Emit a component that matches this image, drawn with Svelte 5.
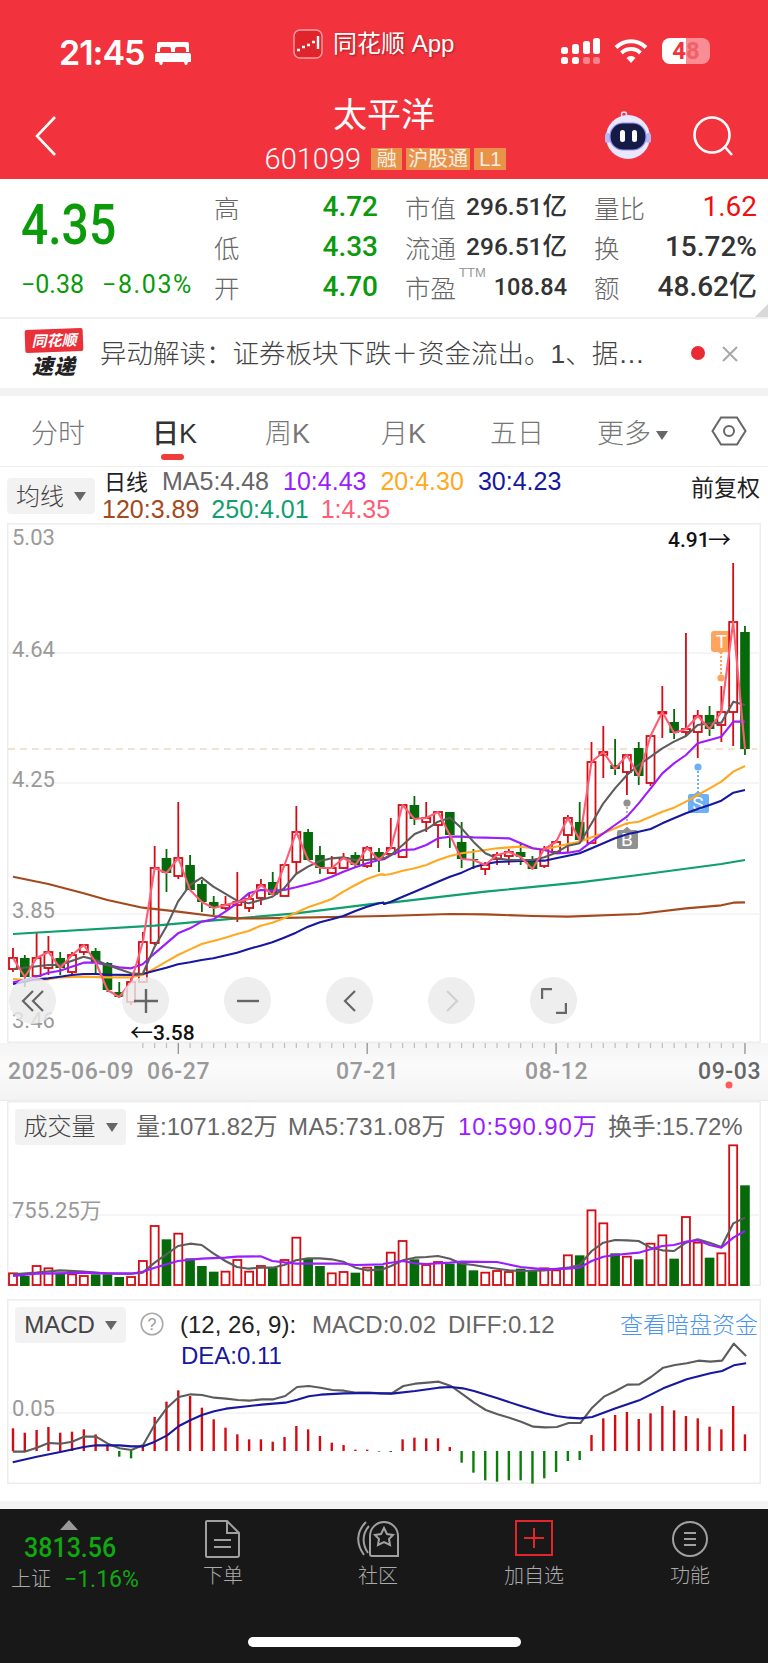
<script>
  // candle rows: [up, wickTop, bodyTop, bodyBottom, wickBottom], full page y
  const candles = [
    [1,948,958,969,972],[0,955,958,977,987],[1,933,958,976,977],[1,936,952,968,975],[0,952,958,968,975],
    [1,952,955,972,975],[1,944,945,952,955],[0,948,951,962,973],[0,962,963,990,992],[0,982,992,997,998],
    [1,977,982,1002,1005],[1,932,942,982,983],[1,846,868,943,945],[0,849,858,873,892],[1,802,858,876,879],
    [0,855,865,890,890],[0,880,884,902,912],[0,896,902,908,915],[1,896,905,908,910],[1,872,902,905,922],
    [1,893,899,908,912],[1,879,885,898,905],[0,872,882,895,895],[1,865,865,896,896],[1,806,832,862,873],
    [0,829,832,860,860],[0,846,855,868,874],[1,856,868,873,874],[1,853,858,868,869],[0,852,855,865,867],
    [1,846,848,866,868],[0,848,852,860,872],[1,818,848,854,854],[1,805,805,857,858],[0,796,805,819,825],
    [1,802,818,822,832],[1,812,812,825,848],[0,812,812,835,848],[0,822,842,859,868],[0,849,859,860,869],
    [1,862,865,869,875],[1,852,855,859,865],[1,849,852,856,865],[0,843,852,857,865],[0,856,860,869,869],
    [1,846,849,866,868],[1,840,842,852,853],[1,815,818,835,852],[0,802,822,840,842],[1,742,762,843,843],
    [1,726,752,755,778],[0,739,765,769,775],[1,755,755,772,795],[0,742,748,776,785],[1,736,736,783,786],
    [1,686,712,713,738],[0,709,722,733,739],[1,633,729,732,736],[1,710,716,732,758],[0,706,715,729,736],
    [1,686,712,725,742],[1,563,622,712,746],[0,626,632,749,755]
  ]
  const cx = (i) => 13 + i * 11.806
  const candleLine = candles.map((c, i) => `${cx(i)},${c[0] ? c[2] : c[3]}`).join(' ')

  // crops of the chart were read at 3x, left half and right half
  const line = (left, right, oy) => [
    ...left.map(([x, y]) => `${x / 3},${oy + y / 3}`),
    ...right.map(([x, y]) => `${384 + x / 3},${oy + y / 3}`)
  ].join(' ')

  const ma5 = line(
    [[39,567],[145,555],[180,555],[251,530],[287,540],[322,555],[393,580],[428,582],[464,500],[499,440],[534,365],[570,315],[605,293],[640,320],[711,362],[746,370],[782,360],[817,350],[852,325],[888,282],[924,260],[960,243],[995,235],[1030,232],[1066,240],[1101,240],[1137,235]],
    [[0,235],[21,225],[56,195],[92,162],[127,148],[162,125],[198,113],[233,145],[268,185],[304,220],[339,235],[375,240],[410,240],[446,240],[481,232],[516,218],[552,197],[587,190],[623,130],[658,70],[693,25],[729,-15],[764,-45],[800,-70],[835,-95],[870,-115],[906,-132],[941,-165],[977,-170],[1012,-172],[1048,-235],[1083,-225]],
    780)
  const ma10 = line(
    [[39,607],[74,600],[109,590],[145,578],[180,572],[215,560],[251,548],[287,548],[322,555],[357,562],[393,565],[428,553],[464,520],[499,490],[534,460],[570,445],[605,425],[640,418],[676,395],[711,370],[746,340],[782,330],[817,332],[852,330],[888,322],[924,313],[960,303],[995,290],[1030,275],[1066,262],[1101,250],[1137,240]],
    [[0,238],[21,225],[56,210],[92,208],[127,195],[162,175],[198,170],[233,170],[268,172],[304,173],[339,174],[375,175],[410,190],[446,205],[481,210],[516,220],[552,218],[587,212],[623,185],[658,160],[693,135],[729,110],[764,70],[800,25],[835,-20],[870,-50],[906,-75],[941,-110],[977,-120],[1012,-130],[1048,-175],[1083,-175]],
    780)
  const ma20 = line(
    [[39,597],[74,600],[109,600],[145,598],[180,592],[251,590],[322,592],[393,592],[428,585],[464,565],[499,545],[534,525],[570,508],[605,492],[640,483],[676,473],[711,462],[746,453],[782,437],[817,428],[852,415],[888,398],[924,382],[960,370],[995,357],[1030,335],[1066,315],[1101,297],[1137,284],[1150,283]],
    [[0,285],[21,282],[56,272],[92,265],[127,255],[162,240],[198,228],[233,220],[268,215],[304,210],[339,205],[375,202],[410,200],[446,205],[481,208],[516,200],[552,192],[587,185],[623,172],[658,160],[693,145],[729,130],[764,125],[800,110],[835,95],[870,83],[906,65],[941,45],[977,25],[1012,5],[1048,-25],[1083,-42]],
    780)
  const ma30 = line(
    [[39,612],[74,605],[109,598],[145,595],[180,590],[215,585],[251,582],[287,582],[322,584],[393,585],[428,582],[464,572],[499,563],[534,553],[570,547],[605,540],[640,535],[711,518],[746,507],[782,497],[817,487],[852,473],[888,458],[924,440],[960,427],[995,418],[1030,408],[1066,393],[1101,380],[1137,370],[1150,368]],
    [[0,372],[21,365],[56,350],[92,335],[127,320],[162,305],[198,290],[233,278],[268,262],[304,252],[339,246],[375,244],[410,243],[446,242],[481,242],[516,235],[552,227],[587,220],[623,205],[658,190],[693,175],[729,163],[764,155],[800,147],[835,130],[870,115],[906,100],[941,87],[977,75],[1012,62],[1048,38],[1083,30]],
    780)
  const ma120 = line(
    [[39,290],[145,312],[251,340],[322,360],[428,383],[534,395],[640,408],[711,415],[782,415],[1150,408]],
    [[0,408],[198,402],[304,403],[446,408],[552,410],[764,402],[906,385],[1012,376],[1048,368],[1083,367]],
    780)
  const ma250 = line(
    [[39,462],[464,437],[711,415],[888,400],[1150,368]],
    [[0,370],[304,335],[587,307],[764,285],[1012,252],[1083,240]],
    780)

  // volume: [up, top] at 3x from y 1090
  const vols = [
    [1,547],[0,555],[1,525],[1,532],[0,545],[1,550],[1,555],[0,550],[0,550],[0,558],[1,558],[1,510],[1,405],[0,445],[1,428],[0,502],
    [0,525],[0,542],[1,542],[1,507],[1,542],[1,525],[0,530],[1,507],[1,440],[0,503],[0,525],[1,547],[1,543],[0,545],[1,530],[0,525],
    [1,485],[1,450],[0,505],[1,522],[1,513],[0,518],[0,510],[0,538],[1,545],[1,540],[1,543],[0,533],[0,540],[1,532],[1,538],[1,493],
    [0,493],[1,358],[1,397],[0,487],[1,497],[0,505],[1,458],[1,433],[0,503],[1,378],[1,455],[0,500],[1,487],[1,163],[0,283]
  ]
  const volMa5 = line(
    [[39,550],[109,545],[180,538],[251,542],[322,548],[393,548],[428,545],[464,515],[499,490],[534,465],[570,458],[605,462],[640,487],[676,510],[711,528],[746,533],[782,530],[817,530],[852,522],[888,508],[924,502],[960,502],[995,505],[1030,512],[1066,530],[1101,538],[1150,535]],
    [[0,533],[21,525],[56,508],[92,500],[127,498],[162,495],[198,503],[233,518],[268,522],[304,528],[339,533],[375,538],[410,540],[481,538],[552,530],[587,522],[623,480],[658,455],[693,447],[729,448],[764,450],[800,470],[835,478],[870,480],[906,455],[941,445],[977,455],[1012,468],[1048,397],[1083,380]],
    1090)
  const volMa10 = line(
    [[39,555],[109,548],[180,547],[251,545],[322,547],[393,548],[428,542],[464,530],[534,510],[605,503],[676,500],[711,497],[782,496],[817,510],[888,518],[960,518],[1030,518],[1066,522],[1150,520]],
    [[0,518],[56,510],[92,517],[127,519],[198,515],[233,512],[339,513],[410,528],[481,535],[552,533],[587,530],[623,510],[658,497],[693,492],[764,485],[800,475],[835,465],[870,462],[906,452],[941,448],[977,462],[1012,470],[1048,440],[1083,420]],
    1090)

  // macd: bar end, read with x scaled 2.04 and y scaled 3 from 1290
  const macdBars = [412,425,417,408,425,422,415,430,462,497,502,462,378,332,298,315,350,385,410,430,445,445,452,438,405,415,435,455,462,476,476,482,483,445,440,442,442,468,515,545,568,572,568,568,578,562,543,510,507,432,382,372,363,384,367,345,358,375,382,407,415,345,430]
  const macdZero = 480
  const my = (y) => 1290 + y / 3
  const wide = (pts) => pts.map(([x, y]) => `${x / 2.04},${my(y)}`).join(' ')
  const diff = wide([[26,482],[50,482],[75,470],[99,456],[123,458],[147,452],[171,437],[196,437],[220,458],[244,472],[268,477],[292,462],[316,400],[341,350],[365,318],[389,310],[412,312],[437,320],[461,323],[485,327],[509,329],[534,325],[558,325],[582,315],[606,288],[630,285],[654,290],[678,297],[702,299],[727,305],[752,305],[776,307],[799,307],[823,285],[847,278],[872,275],[895,272],[920,285],[944,310],[967,335],[991,357],[1015,370],[1039,380],[1063,392],[1088,407],[1112,409],[1136,408],[1160,396],[1184,396],[1208,350],[1232,317],[1256,300],[1280,281],[1304,280],[1328,258],[1353,230],[1377,222],[1401,217],[1425,209],[1449,212],[1473,209],[1497,158],[1522,195]])
  const dea = wide([[26,514],[75,497],[123,483],[171,468],[196,463],[244,463],[268,466],[292,466],[316,452],[341,433],[365,405],[389,387],[412,372],[437,361],[461,353],[509,345],[534,341],[582,335],[606,326],[630,316],[654,311],[702,307],[752,306],[799,308],[847,300],[895,290],[920,288],[944,292],[967,300],[1015,322],[1063,345],[1112,367],[1136,375],[1160,380],[1184,382],[1208,378],[1256,352],[1304,328],[1353,292],[1401,265],[1449,247],[1473,240],[1497,223],[1522,217]])

  const ticks = Array.from({ length: 52 }, (_, i) => i + 11)
  const majors = [14, 30, 46, 62]
</script>

<div class="page">
  <header class="top">
    <div class="status">
      <div class="clock">
        <span>21:45</span>
        <svg width="36" height="24" viewBox="0 0 36 24"><path fill="#fff" d="M4 1h28a2 2 0 0 1 2 2v8h-3V8a2 2 0 0 0-2-2h-7a2 2 0 0 0-2 2v3h-4V8a2 2 0 0 0-2-2H7a2 2 0 0 0-2 2v3H2V3a2 2 0 0 1 2-2zM2 12h32a2 2 0 0 1 2 2v7h-3l-1 3h-2l-1-3H8l-1 3H5l-1-3H0v-7a2 2 0 0 1 2-2z"/></svg>
      </div>
      <div class="app">
        <svg width="30" height="30" viewBox="0 0 30 30">
          <rect x="1" y="1" width="28" height="28" rx="6" fill="#e0242c" stroke="#f6a0a4" stroke-width="1.4"/>
          <path d="M4 21h3M9 18h3M14 16h3M19 13h3M25 7v13" stroke="#fff" stroke-width="2.4" fill="none"/>
        </svg>
        <span>同花顺 App</span>
      </div>
      <div class="sys">
        <svg width="40" height="28" viewBox="0 0 40 28" fill="#fff">
          <rect x="1" y="10" width="7" height="7" rx="2.5"/><rect x="12" y="7" width="7" height="10" rx="2.5"/><rect x="23" y="4" width="7" height="13" rx="2.5"/><rect x="33" y="1" width="7" height="16" rx="2.5"/>
          <rect x="1" y="20" width="7" height="7" rx="2.5"/><rect x="12" y="20" width="7" height="7" rx="2.5"/><rect x="23" y="20" width="7" height="7" rx="2.5" opacity=".4"/><rect x="33" y="20" width="7" height="7" rx="2.5" opacity=".4"/>
        </svg>
        <svg class="wifi" width="34" height="26" viewBox="0 0 34 26" fill="none" stroke="#fff" stroke-width="4">
          <path d="M2 9.5a21 21 0 0 1 30 0M7.5 15a13.5 13.5 0 0 1 19 0"/><path d="M12.5 20a6 6 0 0 1 9 0L17 25z" fill="#fff" stroke="none"/>
        </svg>
        <div class="batt"><b>4</b><i>8</i></div>
      </div>
    </div>
    <nav class="nav">
      <svg class="back" width="24" height="42" viewBox="0 0 24 42" fill="none" stroke="#fff" stroke-width="2.6"><path d="M21 2 3 21l18 19"/></svg>
      <div class="title">
        <h1>太平洋</h1>
        <div class="code">
          <span class="num">601099</span>
          <em>融</em><em class="w3">沪股通</em><em>L1</em>
        </div>
      </div>
      <svg class="bot" width="48" height="48" viewBox="0 0 48 48">
        <circle cx="20" cy="3.5" r="2.5" fill="none" stroke="#dcdcff" stroke-width="1.5"/>
        <circle cx="24" cy="26" r="22" fill="#e8e8ff"/>
        <rect x="1" y="22" width="5" height="10" rx="2.5" fill="#b9b6f5"/><rect x="42" y="22" width="5" height="10" rx="2.5" fill="#b9b6f5"/>
        <rect x="6" y="12" width="36" height="27" rx="13" fill="#141c46" stroke="#9a8cf6" stroke-width="1.2"/>
        <rect x="16" y="19" width="5" height="12" rx="2.5" fill="#fff"/><rect x="28" y="19" width="5" height="12" rx="2.5" fill="#fff"/>
      </svg>
      <svg class="search" width="42" height="42" viewBox="0 0 42 42" fill="none" stroke="#fff" stroke-width="2.6"><circle cx="19" cy="19" r="17.5"/><path d="m32 31 7 8"/></svg>
    </nav>
  </header>

  <section class="quote">
    <div class="price">
      <div class="big">4.35</div>
      <div class="chg"><span>−0.38</span><span class="pct">−8.03%</span></div>
    </div>
    <div class="cells">
      <div class="cell"><label>高</label><b class="g">4.72</b></div>
      <div class="cell"><label>市值</label><b>296.51亿</b></div>
      <div class="cell"><label>量比</label><b class="r">1.62</b></div>
      <div class="cell"><label>低</label><b class="g">4.33</b></div>
      <div class="cell"><label>流通</label><b>296.51亿</b></div>
      <div class="cell"><label>换</label><b class="lg">15.72%</b></div>
      <div class="cell"><label>开</label><b class="g">4.70</b></div>
      <div class="cell"><label>市盈<sup>TTM</sup></label><b class="sm">108.84</b></div>
      <div class="cell"><label>额</label><b class="lg">48.62亿</b></div>
    </div>
    <span class="corner"></span>
  </section>

  <section class="notice">
    <div class="logo">
      <span class="flag">同花顺</span>
      <span class="fast">速递</span>
    </div>
    <p>异动解读：证券板块下跌＋资金流出。1、据…</p>
    <span class="dot"></span>
    <svg width="16" height="16" viewBox="0 0 16 16" stroke="#a8a8a8" stroke-width="2"><path d="m1 1 14 14M15 1 1 15"/></svg>
  </section>

  <section class="tabs">
    <span class="t1">分时</span>
    <span class="t2 on">日K</span>
    <span class="t3">周K</span>
    <span class="t4">月K</span>
    <span class="t5">五日</span>
    <span class="t6">更多<i class="tri"></i></span>
    <svg class="hex" width="36" height="30" viewBox="0 0 36 30" fill="none" stroke="#666" stroke-width="2"><path d="M10 1.5h16L34.5 15 26 28.5H10L1.500 15z"/><circle cx="18" cy="15" r="5"/></svg>
  </section>

  <section class="legend">
    <div class="sel sel1">均线<i class="tri"></i></div>
    <div class="vals">
      <div><span class="k">日线</span><span class="c5">MA5:4.48</span><span class="c10">10:4.43</span><span class="c20">20:4.30</span><span class="c30">30:4.23</span></div>
      <div class="r2"><span class="c120">120:3.89</span><span class="c250">250:4.01</span><span class="c1">1:4.35</span></div>
    </div>
    <span class="adj">前复权</span>
  </section>

  <section class="plot">
    <svg width="754" height="520" viewBox="7 523 754 520">
      <g class="grid">
        <path d="M9 653H759M9 783H759M9 914H759"/>
      </g>
      <path d="M8 749H757" stroke="#e6c6a6" stroke-width="1.2" stroke-dasharray="7 5" fill="none"/>

      <g class="axis">
        <text x="12" y="545">5.03</text>
        <text x="12" y="657">4.64</text>
        <text x="12" y="787">4.25</text>
        <text x="12" y="918">3.85</text>
        <text x="12" y="1028">3.46</text>
      </g>

      <!-- buy / sell marks -->
      <g>
        <path d="M721 652v26" stroke="#ffa45c" stroke-width="2" stroke-dasharray="2 2"/>
        <circle cx="721" cy="678" r="3.6" fill="#ffa45c"/>
        <path d="M714 631h15a3 3 0 0 1 3 3v15a3 3 0 0 1-3 3h-5l-3 2-3-2h-4a3 3 0 0 1-3-3v-15a3 3 0 0 1 3-3z" fill="#ffa45c"/>
        <text class="mark" x="721.500" y="648">T</text>

        <path d="M698 767v26" stroke="#6cb0f5" stroke-width="2" stroke-dasharray="2 2"/>
        <circle cx="698" cy="767" r="3.6" fill="#6cb0f5"/>
        <path d="M690 794h4l4-3 4 3h5a2 2 0 0 1 2 2v15a2 2 0 0 1-2 2h-17a2 2 0 0 1-2-2v-15a2 2 0 0 1 2-2z" fill="#6cb0f5"/>
        <text class="mark" x="698" y="810">S</text>

        <path d="M627 803v26" stroke="#b0b0b0" stroke-width="2" stroke-dasharray="2 2"/>
        <circle cx="627" cy="803" r="3.6" fill="#909090"/>
        <path d="M619 830h4l4-3 4 3h5a2 2 0 0 1 2 2v15a2 2 0 0 1-2 2h-17a2 2 0 0 1-2-2v-15a2 2 0 0 1 2-2z" fill="#909090"/>
        <text class="mark" x="627" y="846">B</text>
      </g>

      {#each candles as c, i}
        <path d="M{cx(i)} {c[1]}V{c[4]}" stroke={c[0] ? '#d40b12' : '#06690a'} stroke-width="1.8"/>
        {#if c[0]}
          <rect x={cx(i) - 4} y={c[2]} width="8" height={Math.max(c[3] - c[2], 1.500)} fill="#fff" stroke="#d40b12" stroke-width="1.8"/>
        {:else}
          <rect x={cx(i) - 4.800} y={c[2]} width="9.600" height={c[3] - c[2]} fill="#06690a"/>
        {/if}
      {/each}

      <polyline class="ln" stroke="#0f9f6e" points={ma250}/>
      <polyline class="ln" stroke="#a4491c" points={ma120}/>
      <polyline class="ln" stroke="#ffa922" points={ma20}/>
      <polyline class="ln" stroke="#17179f" points={ma30}/>
      <polyline class="ln" stroke="#9a1cff" points={ma10}/>
      <polyline class="ln" stroke="#5c5c5c" points={ma5}/>
      <polyline class="ln" stroke="#ff5d75" points={candleLine}/>

      <text class="mm" x="668" y="547">4.91</text>
      <text class="arw" x="708" y="548">→</text>
      <text class="arw" x="130" y="1041">←</text>
      <text class="mm" x="153" y="1040">3.58</text>
    </svg>

    <div class="ctrl">
      <button class="b1" aria-label="back"><svg width="24" height="22" viewBox="0 0 24 22" fill="none" stroke="#666" stroke-width="2.200"><path d="M12 1 2 11l10 10M22 1 12 11l10 10"/></svg></button>
      <button class="b2" aria-label="zoom in"><svg width="24" height="24" viewBox="0 0 24 24" stroke="#666" stroke-width="2.400"><path d="M0 12h24M12 0v24"/></svg></button>
      <button aria-label="zoom out"><svg width="24" height="24" viewBox="0 0 24 24" stroke="#666" stroke-width="2.400"><path d="M1 12h22"/></svg></button>
      <button aria-label="left"><svg width="14" height="22" viewBox="0 0 14 22" fill="none" stroke="#666" stroke-width="2.200"><path d="M12 1 2 11l10 10"/></svg></button>
      <button aria-label="right"><svg width="14" height="22" viewBox="0 0 14 22" fill="none" stroke="#d0d0d0" stroke-width="2.200"><path d="m2 1 10 10L2 21"/></svg></button>
      <button aria-label="full"><svg width="26" height="26" viewBox="0 0 26 26" fill="none" stroke="#666" stroke-width="2.400"><path d="M1 11V1h10M25 15v10H15"/></svg></button>
    </div>
  </section>

  <section class="dates">
    <svg width="768" height="56" viewBox="0 1043 768 56">
      {#each ticks as i}
        <path d="M{cx(i)} 1043v{majors.includes(i) ? 11 : 5}" stroke={majors.includes(i) ? '#888' : '#bdbdbd'} stroke-width="1.200"/>
      {/each}
      <text x="8" y="1079">2025-06-09</text>
      <text x="147" y="1079">06-27</text>
      <text x="336" y="1079">07-21</text>
      <text x="525" y="1079">08-12</text>
      <text x="698" y="1079" class="last">09-03</text>
      <circle cx="729" cy="1085" r="3.500" fill="#ff5a5a"/>
    </svg>
  </section>

  <section class="panel vol">
    <div class="phead">
      <div class="sel">成交量<i class="tri"></i></div>
      <span class="s1">量:1071.82万</span>
      <span class="s2">MA5:731.08万</span>
      <span class="s3 c10">10:590.90万</span>
      <span class="s4">换手:15.72%</span>
    </div>
    <svg width="754" height="185" viewBox="7 1100 754 185">
      <path d="M9 1214H759" class="gridl"/>
      {#each vols as v, i}
        {#if v[0]}
          <rect x={cx(i) - 4} y={1090 + v[1] / 3} width="8" height={1284 - (1090 + v[1] / 3)} fill="#fff" stroke="#d40b12" stroke-width="1.800"/>
        {:else}
          <rect x={cx(i) - 4.800} y={1090 + v[1] / 3} width="9.600" height={1285 - (1090 + v[1] / 3)} fill="#06690a"/>
        {/if}
      {/each}
      <polyline class="ln" stroke="#5c5c5c" points={volMa5}/>
      <polyline class="ln" stroke="#9a1cff" points={volMa10}/>
      <text class="vaxis" x="12" y="1217">755.25万</text>
    </svg>
  </section>

  <section class="panel macd">
    <div class="phead">
      <div class="sel">MACD<i class="tri"></i></div>
      <svg class="q" width="24" height="24" viewBox="0 0 24 24"><circle cx="12" cy="12" r="10.800" fill="none" stroke="#aaa" stroke-width="1.600"/><text x="12" y="18" text-anchor="middle" font-size="16" fill="#999" font-family="Liberation Sans">?</text></svg>
      <span class="m1">(12, 26, 9):</span>
      <span class="m2">MACD:0.02</span>
      <span class="m3">DIFF:0.12</span>
      <span class="m4">查看暗盘资金</span>
      <span class="m5">DEA:0.11</span>
    </div>
    <svg width="754" height="185" viewBox="7 1298 754 185">
      <path d="M9 1412H759" class="gridl"/>
      {#each macdBars as b, i}
        <path d="M{cx(i)} {my(macdZero)}V{my(b)}" stroke={b > macdZero ? '#0a7d0a' : '#d40b12'} stroke-width="2.400"/>
      {/each}
      <polyline class="ln" stroke="#5c5c5c" points={diff}/>
      <polyline class="ln" stroke="#17179f" points={dea}/>
      <text class="vaxis" x="12" y="1415">0.05</text>
    </svg>
  </section>

  <div class="gap"></div>

  <footer class="bar">
    <div class="index">
      <i class="up"></i>
      <div class="ixv">3813.56</div>
      <div class="ixr"><span>上证</span><b>−1.16%</b></div>
    </div>
    <div class="item i1">
      <svg width="36" height="38" viewBox="0 0 36 38" fill="none" stroke="#a0a0a0" stroke-width="2"><path d="M2 1h20l12 12v22a2 2 0 0 1-2 2H2a1 1 0 0 1-1-1V2a1 1 0 0 1 1-1zM22 1v12h12M9 20h17M9 27h17"/></svg>
      <span>下单</span>
    </div>
    <div class="item i2">
      <svg width="42" height="38" viewBox="0 0 42 38" fill="none" stroke="#a0a0a0" stroke-width="2"><path d="M41 36H15a2 2 0 0 1-2-2V16a14 14 0 0 1 28 0zM7 35C-1 24-1 12 9 2M11 33C5 24 5 14 12 6"/><path d="m27 8 3 6 6 1-4 4 1 6-6-3-6 3 1-6-4-4 6-1z"/></svg>
      <span>社区</span>
    </div>
    <div class="item i3">
      <svg width="38" height="36" viewBox="0 0 38 36" fill="none"><rect x="1" y="1" width="36" height="34" stroke="#e0262c" stroke-width="2"/><path d="M9 18h20M19 8v20" stroke="#e0262c" stroke-width="2"/></svg>
      <span>加自选</span>
    </div>
    <div class="item i4">
      <svg width="36" height="36" viewBox="0 0 36 36" fill="none" stroke="#a0a0a0" stroke-width="2"><circle cx="18" cy="18" r="17"/><path d="M12 12h12M12 18h12M12 24h12"/></svg>
      <span>功能</span>
    </div>
    <div class="home"></div>
  </footer>
</div>

<style>
  :global(body) {
    margin: 0;
    background: #fff;
  }

  .page {
    width: 768px;
    height: 1663px;
    overflow: hidden;
    font-family: 'Liberation Sans', 'Noto Sans CJK SC', sans-serif;
    color: #333;
  }

  /* header */
  .top {
    height: 179px;
    background: #f2323c;
    color: #fff;
  }

  .status {
    height: 92px;
    display: flex;
    align-items: flex-start;
    padding-top: 28px;
    box-sizing: border-box;
  }

  .clock {
    display: flex;
    align-items: center;
    gap: 11px;
    width: 235px;
    padding: 9px 0 0 59px;
    box-sizing: border-box;
    font: 600 34px/32px Inter, 'Liberation Sans', sans-serif;
    letter-spacing: -1px;
  }

  .app {
    display: flex;
    align-items: center;
    gap: 10px;
    margin-left: 58px;
    width: 268px;
    font-size: 24px;
    line-height: 32px;
    text-shadow: 1px 1px 2px rgba(0, 0, 0, 0.35);
  }

  .sys {
    display: flex;
    align-items: center;
    gap: 14px;
    padding-top: 9px;
    margin-left: -1px;
  }

  .batt {
    width: 48px;
    height: 26px;
    border-radius: 8px;
    display: flex;
    justify-content: center;
    align-items: center;
    font: 700 24px/26px Roboto, sans-serif;
    background: linear-gradient(90deg, #fff 50%, rgba(255, 255, 255, 0.45) 50%);
    color: #f2323c;
  }

  .batt b {
    font-weight: 700;
  }

  .batt i {
    font-style: normal;
    color: #f2606a;
  }

  .nav {
    position: relative;
    height: 87px;
    display: flex;
    justify-content: center;
  }

  .nav > svg {
    position: absolute;
  }

  .back {
    left: 34px;
    top: 23px;
  }

  .bot {
    left: 604px;
    top: 19px;
  }

  .search {
    left: 693px;
    top: 24px;
  }

  .title {
    text-align: center;
  }

  h1 {
    margin: 4px 0 0;
    font-weight: 400;
    font-size: 34px;
    line-height: 38px;
  }

  .code {
    display: flex;
    align-items: center;
    gap: 4px;
    margin-top: 14px;
    height: 22px;
    margin-left: 3px;
  }

  .num {
    font-size: 29px;
    margin-right: 6px;
    font-family: Roboto, 'Liberation Sans', sans-serif;
    font-weight: 300;
  }

  .code em {
    font-style: normal;
    background: #e8924a;
    height: 22px;
    line-height: 22px;
    font-size: 20px;
    padding: 0 5px;
    min-width: 21px;
    text-align: center;
    color: #fbeee0;
  }

  .code em.w3 {
    padding: 0 2px;
  }

  /* quote */
  .quote {
    position: relative;
    height: 138px;
    display: flex;
    padding-top: 8px;
    box-sizing: border-box;
  }

  .price {
    width: 214px;
    padding-left: 21px;
    box-sizing: border-box;
    color: #0a9a0a;
    font-family: Roboto, sans-serif;
  }

  .big {
    font-size: 48px;
    font-weight: 500;
    line-height: 50px;
    margin-top: 13px;
    transform: scaleY(1.16);
    transform-origin: left center;
  }

  .chg {
    display: flex;
    gap: 18px;
    font-size: 25px;
    line-height: 28px;
    margin-top: 21px;
    white-space: nowrap;
  }

  .pct {
    letter-spacing: 1.6px;
  }

  .cells {
    display: grid;
    grid-template-columns: 164px 162px 163px;
    grid-auto-rows: 40px;
    column-gap: 27px;
  }

  .cell {
    display: flex;
    justify-content: space-between;
    align-items: center;
    white-space: nowrap;
  }

  label {
    font-size: 25.5px;
    color: #666;
    font-weight: 300;
    position: relative;
    top: -1px;
  }

  sup {
    position: absolute;
    left: 54px;
    top: -3px;
    font-size: 13px;
    line-height: 16px;
    color: #999;
  }

  .cell b {
    font: 500 24.5px/32px Roboto, 'Noto Sans CJK SC', sans-serif;
    color: #333;
  }

  .cell b.g {
    color: #0a9a0a;
    font-size: 28px;
  }

  .cell b.r {
    color: #f01010;
    font-size: 28px;
    font-weight: 400;
  }

  .cell b.lg {
    font-size: 28px;
  }

  .cell b.sm {
    font-size: 23.5px;
  }

  .corner {
    position: absolute;
    right: 0;
    bottom: 0;
    border-left: 13px solid transparent;
    border-bottom: 13px solid #d8d8d8;
  }

  /* notice */
  .notice {
    border-top: 2px solid #f0f0f0;
    height: 69px;
    display: flex;
    align-items: center;
    position: relative;
    padding-left: 24px;
  }

  .logo {
    width: 60px;
    display: flex;
    flex-direction: column;
    align-items: center;
  }

  .flag {
    background: #ea3039;
    color: #fff;
    font-size: 15px;
    font-weight: 700;
    font-style: italic;
    line-height: 23px;
    width: 58px;
    text-align: center;
    border-radius: 2px;
    transform: rotate(-2deg);
  }

  .fast {
    font-size: 21px;
    font-weight: 800;
    font-style: italic;
    line-height: 22px;
    margin-top: 4px;
    color: #222;
    letter-spacing: 1px;
  }

  .notice p {
    margin: 0 0 0 16px;
    width: 580px;
    font-size: 26.500px;
    line-height: 36px;
    color: #444;
    white-space: nowrap;
    font-weight: 300;
  }

  .dot {
    width: 14px;
    height: 14px;
    border-radius: 50%;
    background: #ea2b33;
    position: absolute;
    left: 691px;
    top: 27px;
  }

  .notice > svg {
    position: absolute;
    left: 722px;
    top: 27px;
  }

  /* tabs */
  .tabs {
    border-top: 8px solid #f3f3f3;
    height: 70px;
    border-bottom: 1px solid #eee;
    position: relative;
    font-size: 27px;
    color: #777;
    font-weight: 300;
    display: flex;
    align-items: center;
    padding-left: 31px;
  }

  .tabs span {
    white-space: nowrap;
  }

  .t1 {
    width: 121px;
  }

  .t2 {
    width: 113px;
  }

  .t3 {
    width: 116px;
  }

  .t4 {
    width: 109px;
  }

  .t5 {
    width: 107px;
  }

  .tabs .on {
    color: #333;
    font-weight: 500;
    position: relative;
  }

  .tabs .on::after {
    content: '';
    position: absolute;
    left: 9px;
    top: 42px;
    width: 23px;
    height: 6px;
    border-radius: 3px;
    background: #f03c3c;
  }

  .tri {
    display: inline-block;
    margin-left: 5px;
    vertical-align: middle;
    border-left: 6.500px solid transparent;
    border-right: 6.500px solid transparent;
    border-top: 9px solid #666;
  }

  .hex {
    position: absolute;
    left: 711px;
    top: 20px;
  }

  /* legend */
  .legend {
    height: 56px;
    position: relative;
    display: flex;
    padding-left: 7px;
    font-size: 25px;
    line-height: 27px;
  }

  .sel {
    background: #f2f2f2;
    border-radius: 4px;
    width: 111px;
    height: 36px;
    display: flex;
    align-items: center;
    justify-content: center;
    gap: 6px;
    font-size: 24px;
    font-weight: 300;
    color: #444;
    flex: none;
  }

  .sel .tri {
    margin-left: 4px;
  }

  .sel1 {
    width: 88px;
    margin-top: 11px;
  }

  .vals {
    margin: 1px 0 0 9px;
    white-space: nowrap;
  }

  .vals span {
    margin-right: 14px;
  }

  .vals .r2 {
    margin-left: -2px;
  }

  .vals .r2 span {
    margin-right: 12px;
  }

  .k {
    color: #222;
    font-size: 22px;
  }

  .c5 {
    color: #666;
  }

  .c10 {
    color: #9a1cff;
  }

  .c20 {
    color: #ffa922;
  }

  .c30 {
    color: #17179f;
  }

  .c120 {
    color: #a4491c;
  }

  .c250 {
    color: #0f9f6e;
  }

  .c1 {
    color: #ff5d75;
  }

  .adj {
    position: absolute;
    left: 691px;
    top: 8px;
    font-size: 23px;
    color: #222;
  }

  /* main chart */
  .plot {
    position: relative;
    margin: 0 7px;
    height: 520px;
    box-shadow: inset 0 0 0 1.500px #ededed;
  }

  .plot > svg,
  .panel > svg,
  .dates svg {
    display: block;
    overflow: visible;
  }

  .grid path,
  .gridl {
    stroke: #f2f2f2;
    stroke-width: 1.500;
    fill: none;
  }

  .axis text,
  .vaxis {
    font: 400 22px Roboto, 'Noto Sans CJK SC', sans-serif;
    fill: #9a9a9a;
  }

  .mark {
    font: 400 19px Roboto, sans-serif;
    fill: #fff;
    text-anchor: middle;
  }

  .ln {
    fill: none;
    stroke-width: 2.100;
    stroke-linejoin: round;
  }

  .mm {
    font: 500 21px Roboto, 'Liberation Sans', sans-serif;
    fill: #111;
  }

  .arw {
    font: 400 23px 'Noto Sans CJK SC', sans-serif;
    fill: #111;
  }

  .ctrl {
    position: absolute;
    left: 2px;
    top: 454px;
    display: flex;
    gap: 55px;
  }

  .ctrl button {
    width: 47px;
    height: 47px;
    padding: 0;
    border: 0;
    border-radius: 50%;
    background: rgba(234, 234, 234, 0.82);
    display: flex;
    align-items: center;
    justify-content: center;
  }

  .ctrl .b2 {
    margin-left: 11px;
  }

  /* date axis */
  .dates {
    height: 57px;
    background: linear-gradient(180deg, #f4f4f4, #fbfbfb 40%, #f3f3f3);
    border-bottom: 1px solid #ececec;
  }

  .dates text {
    font: 500 23px Roboto, sans-serif;
    fill: #999;
    letter-spacing: 0.6px;
  }

  .dates .last {
    fill: #666;
  }

  /* sub panels */
  .panel {
    position: relative;
    margin: 0 7px;
    height: 185px;
    box-sizing: border-box;
    box-shadow: inset 0 0 0 1.500px #ededed;
  }

  .macd {
    margin-top: 13px;
  }

  .phead {
    position: absolute;
    inset: 0;
    font-size: 24px;
    line-height: 28px;
    color: #666;
    white-space: nowrap;
  }

  .phead span {
    position: absolute;
  }

  .phead .sel {
    position: absolute;
    left: 8px;
    top: 8px;
    justify-content: center;
  }

  .vol span {
    top: 12px;
  }

  .s1 {
    left: 129px;
  }

  .s2 {
    left: 281px;
    letter-spacing: 0.4px;
  }

  .s3 {
    left: 451px;
    letter-spacing: 0.9px;
  }

  .s4 {
    left: 601px;
    letter-spacing: -0.2px;
  }

  .q {
    position: absolute;
    left: 133px;
    top: 13px;
  }

  .macd span {
    top: 12px;
  }

  .macd .m1 {
    left: 173px;
    color: #222;
  }

  .m2 {
    left: 305px;
  }

  .m3 {
    left: 441px;
  }

  .macd .m4 {
    left: 613px;
    color: #4a94ee;
    font-size: 23px;
    font-weight: 300;
  }

  .macd .m5 {
    left: 174px;
    top: 43px;
    color: #17179f;
  }

  .gap {
    height: 25px;
    background: linear-gradient(180deg, #fff 17px, #f3f3f3 17px);
  }

  /* bottom bar */
  .bar {
    position: relative;
    height: 155px;
    background: #181818;
    color: #aaa;
    font-size: 21px;
  }

  .index {
    position: absolute;
    left: 11px;
    top: 0;
  }

  .up {
    position: absolute;
    left: 49px;
    top: 11px;
    border-left: 9px solid transparent;
    border-right: 9px solid transparent;
    border-bottom: 10px solid #999;
  }

  .ixv {
    position: absolute;
    left: 13px;
    top: 24px;
    font: 500 25px/30px Roboto, sans-serif;
    color: #0fa80f;
    transform: scaleY(1.14);
  }

  .ixr {
    position: absolute;
    left: 0;
    top: 56px;
    width: 140px;
    display: flex;
    gap: 13px;
    align-items: center;
    font-size: 20px;
    font-weight: 300;
    line-height: 28px;
  }

  .ixr b {
    font: 400 23px Roboto, sans-serif;
    color: #0fa80f;
  }

  .item {
    position: absolute;
    top: 11px;
    display: flex;
    flex-direction: column;
    align-items: center;
    width: 80px;
    gap: 3px;
    font-weight: 300;
  }

  .item span {
    line-height: 30px;
    white-space: nowrap;
    font-size: 20px;
  }

  .i1 {
    left: 183px;
  }

  .i2 {
    left: 338px;
  }

  .i3 {
    left: 494px;
  }

  .i3 svg {
    margin-bottom: 2px;
  }

  .i4 {
    left: 650px;
  }

  .i4 svg {
    margin-top: 1px;
    margin-bottom: 1px;
  }

  .home {
    position: absolute;
    left: 248px;
    top: 128px;
    width: 273px;
    height: 10px;
    border-radius: 5px;
    background: #fff;
  }
</style>
